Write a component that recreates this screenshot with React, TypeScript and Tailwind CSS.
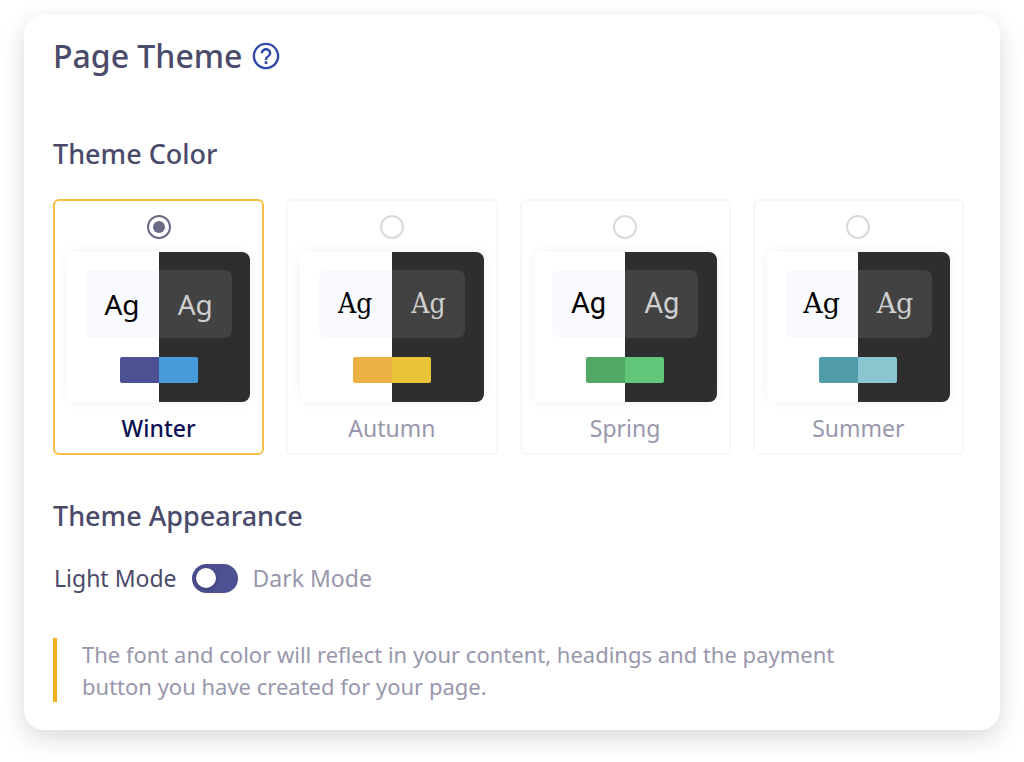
import { useState } from 'react';
import { clsx } from 'clsx';

const themes = [
  {
    id: 'winter',
    label: 'Winter',
    font: 'font-["Noto_Sans",sans-serif] text-[28px]',
    light: 'bg-[#4d5092]',
    dark: 'bg-[#469ad9]',
  },
  {
    id: 'autumn',
    label: 'Autumn',
    font: 'font-["DejaVu_Serif_Condensed","DejaVu_Serif",serif] text-[28px]',
    light: 'bg-[#eab242]',
    dark: 'bg-[#ebc338]',
  },
  {
    id: 'spring',
    label: 'Spring',
    font: 'font-[Roboto,sans-serif] text-[29px]',
    light: 'bg-[#53a866]',
    dark: 'bg-[#61c678]',
  },
  {
    id: 'summer',
    label: 'Summer',
    font: 'font-["DejaVu_Serif",serif] text-[27px]',
    light: 'bg-[#509da9]',
    dark: 'bg-[#89c6d0]',
  },
];

type Theme = (typeof themes)[number];

function ThemeCard({ theme, selected, onSelect }: { theme: Theme; selected: boolean; onSelect: () => void }) {
  return (
    <label
      className={clsx(
        'flex cursor-pointer flex-col items-center rounded-md border-2 px-3 pt-[14px] pb-[9px]',
        selected ? 'border-[#f8bd42]' : 'border-[#f7f7fa]',
      )}
    >
      <input
        type="radio"
        name="theme"
        checked={selected}
        onChange={onSelect}
        className="grid h-6 w-6 cursor-pointer appearance-none place-items-center rounded-full border-2 border-[#d9d9e0] before:h-3 before:w-3 before:rounded-full checked:border-[#6c6b87] checked:before:bg-[#6c6b87]"
      />
      {/* Light and dark preview */}
      <div className="mt-[13px] grid h-[150px] w-full grid-cols-2 overflow-hidden rounded-lg shadow-[0_0_12px_rgba(0,0,0,0.06)]">
        <div className="flex flex-col items-end bg-white pt-[18px]">
          <div
            className={clsx(
              'flex h-[68px] w-4/5 items-center justify-center rounded-l-lg bg-[#f8fafd] text-black',
              theme.font,
            )}
          >
            Ag
          </div>
          <div className={clsx('mt-[19px] h-[26px] w-[39px] rounded-l-xs', theme.light)} />
        </div>
        <div className="flex flex-col items-start bg-[#2e2e2e] pt-[18px]">
          <div
            className={clsx(
              'flex h-[68px] w-4/5 items-center justify-center rounded-r-lg bg-[#424242] text-[#cfcfcf]',
              theme.font,
            )}
          >
            Ag
          </div>
          <div className={clsx('mt-[19px] h-[26px] w-[39px] rounded-r-xs', theme.dark)} />
        </div>
      </div>
      <span
        className={clsx(
          'mt-[10px] text-[23px] leading-8',
          selected ? 'font-medium text-[#0b0f52]' : 'text-[#9897ac]',
        )}
      >
        {theme.label}
      </span>
    </label>
  );
}

export default function App() {
  const [selected, setSelected] = useState('winter');
  const [dark, setDark] = useState(false);

  return (
    <main className='bg-white px-6 pt-[15px] pb-8 font-["Noto_Sans",sans-serif] text-[#4a4a6a]'>
      <section className="rounded-[20px] bg-white pt-[21px] pr-9 pb-7 pl-[29px] shadow-[0_8px_24px_rgba(0,0,0,0.15)]">
        <div className="flex items-center gap-2">
          <h1 className="text-[32px] leading-10 font-medium">Page Theme</h1>
          <button type="button" aria-label="Help" className="cursor-pointer text-[#3049ab]">
            <svg viewBox="0 0 24 24" className="h-8 w-8" fill="currentColor">
              <path d="M11 18h2v-2h-2v2zm1-16C6.480 2 2 6.480 2 12s4.480 10 10 10 10-4.480 10-10S17.520 2 12 2zm0 18.200c-4.530 0-8.200-3.670-8.200-8.200S7.470 3.800 12 3.800s8.200 3.670 8.200 8.200-3.670 8.200-8.200 8.200zm0-14.200c-2.210 0-4 1.790-4 4h1.800c0-1.210.990-2.200 2.200-2.200s2.200.990 2.200 2.200c0 2-3.100 1.750-3.100 5h1.800c0-2.250 3.100-2.500 3.100-5 0-2.210-1.790-4-4-4z" />
            </svg>
          </button>
        </div>

        <fieldset className="mt-[60px]">
          <legend className="text-[27px] leading-9 font-medium">Theme Color</legend>
          <div className="mt-[27px] grid grid-cols-4 gap-[22px]">
            {themes.map((theme) => (
              <ThemeCard
                key={theme.id}
                theme={theme}
                selected={selected === theme.id}
                onSelect={() => setSelected(theme.id)}
              />
            ))}
          </div>
        </fieldset>

        <h2 className="mt-[43px] text-[27px] leading-9 font-medium">Theme Appearance</h2>
        <div className="mt-7 flex items-center pl-px text-[23px] leading-8">
          <label htmlFor="mode" className={dark ? 'text-[#9897ac]' : 'text-[#4a4a6a]'}>
            Light Mode
          </label>
          <input
            id="mode"
            type="checkbox"
            role="switch"
            checked={dark}
            onChange={(e) => setDark(e.target.checked)}
            className="mx-[15px] flex h-[29px] w-[46px] cursor-pointer appearance-none items-center rounded-full bg-[#4d5092] px-1 before:h-5 before:w-5 before:rounded-full before:bg-white before:shadow-[0_1px_4px_rgba(0,0,0,0.3)] checked:justify-end"
          />
          <label htmlFor="mode" className={dark ? 'text-[#4a4a6a]' : 'text-[#9897ac]'}>
            Dark Mode
          </label>
        </div>

        <div className="mt-11 border-l-4 border-[#f5b11d] pl-[25px]">
          <p className="max-w-[760px] text-[22px] leading-8 text-[#9897ac]">
            The font and color will reflect in your content, headings and the payment button you have created for your
            page.
          </p>
        </div>
      </section>
    </main>
  );
}
